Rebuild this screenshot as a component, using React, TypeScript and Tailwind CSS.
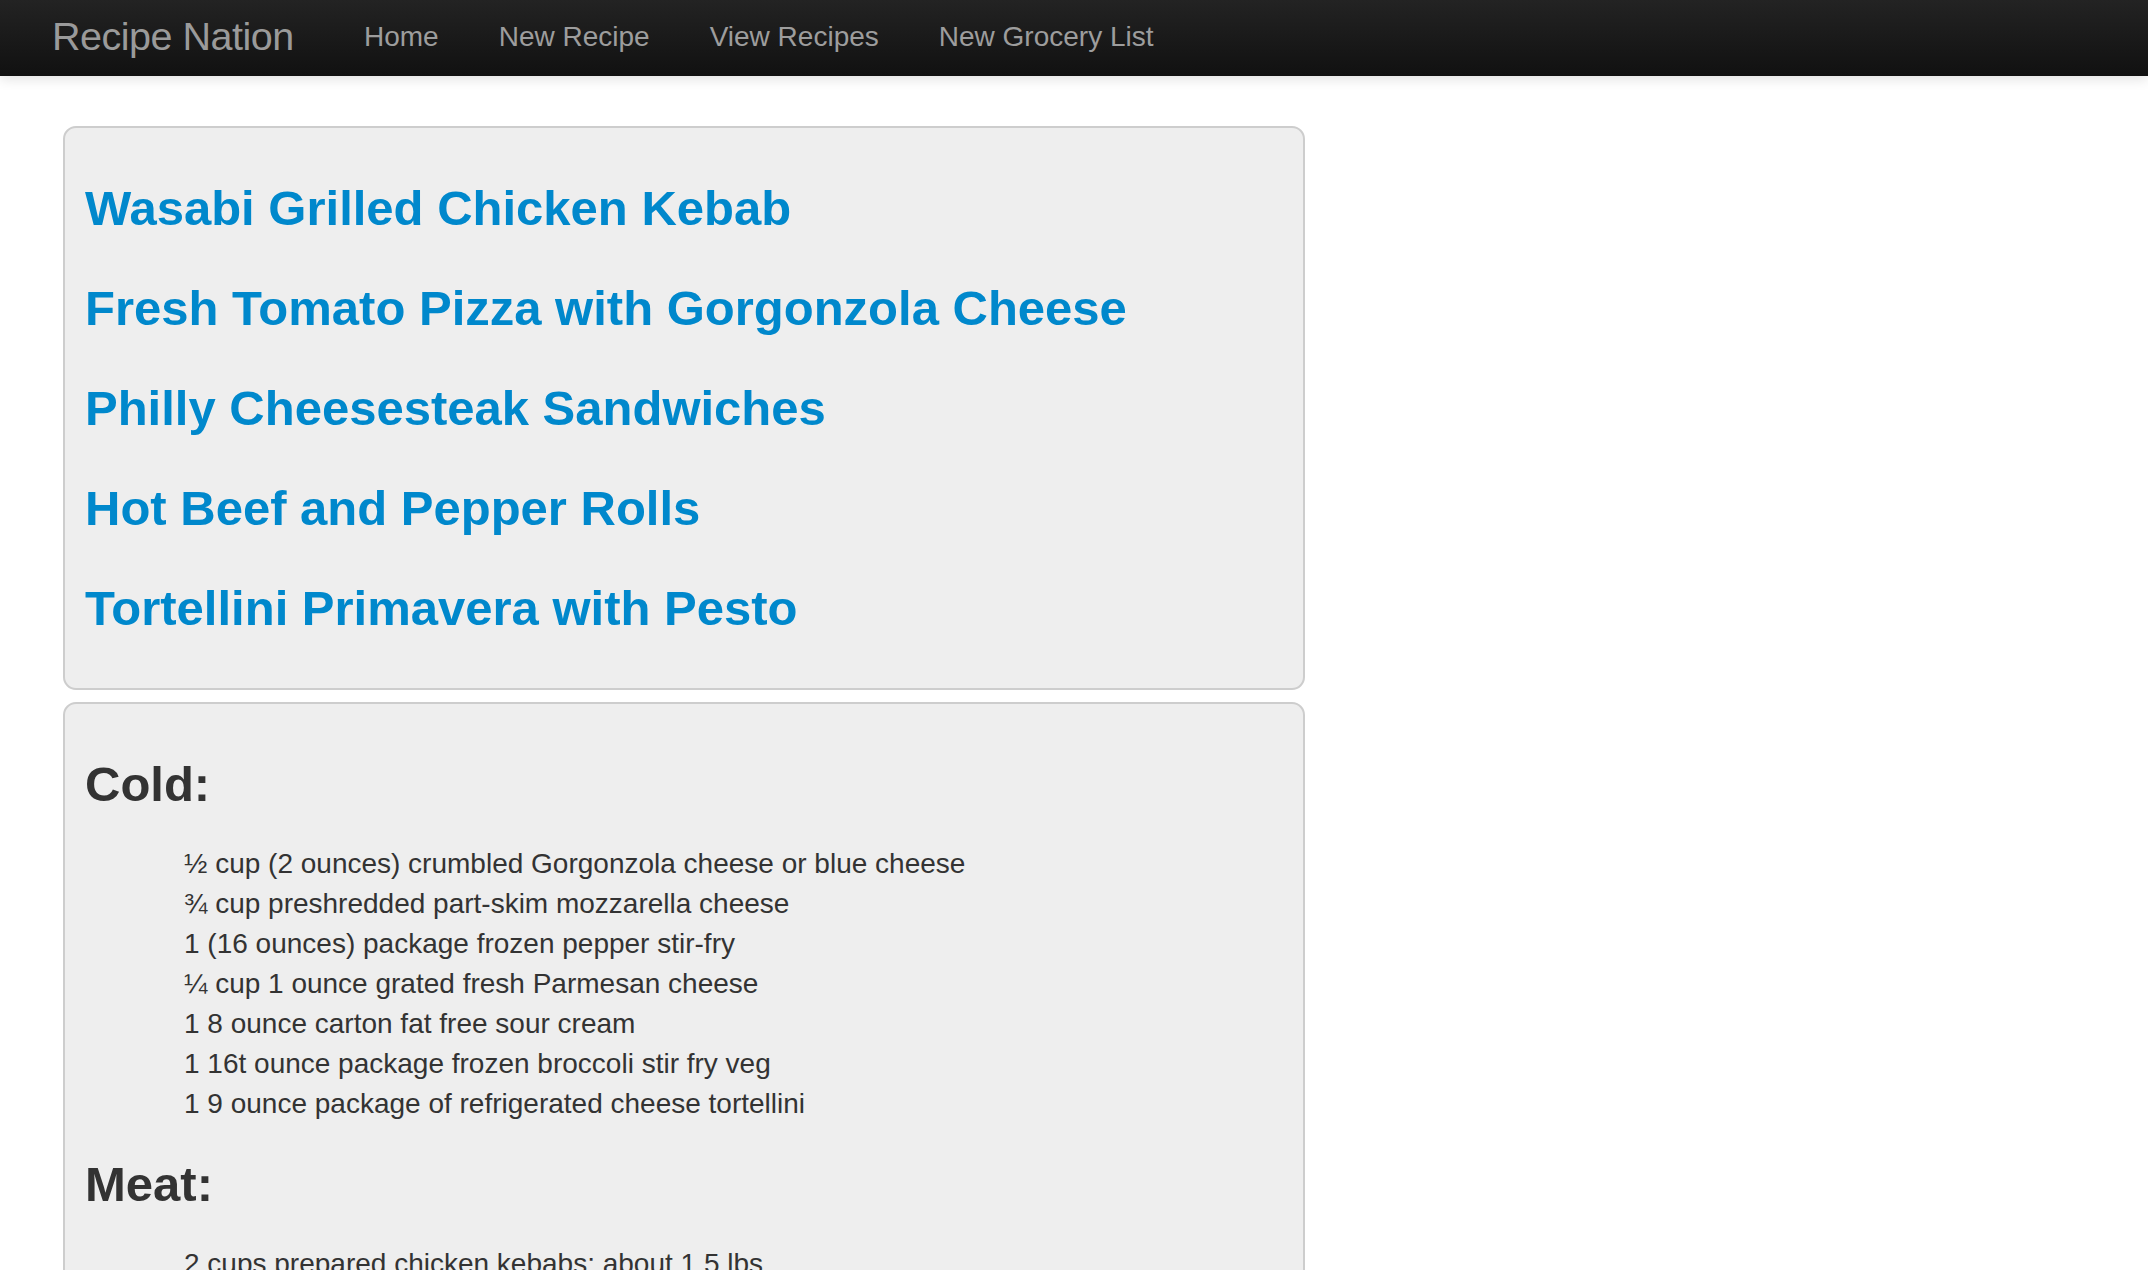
import React from "react";

const recipes = [
  "Wasabi Grilled Chicken Kebab",
  "Fresh Tomato Pizza with Gorgonzola Cheese",
  "Philly Cheesesteak Sandwiches",
  "Hot Beef and Pepper Rolls",
  "Tortellini Primavera with Pesto",
];

const groups: { title: string; items: string[] }[] = [
  {
    title: "Cold:",
    items: [
      "½ cup (2 ounces) crumbled Gorgonzola cheese or blue cheese",
      "¾ cup preshredded part-skim mozzarella cheese",
      "1 (16 ounces) package frozen pepper stir-fry",
      "¼ cup 1 ounce grated fresh Parmesan cheese",
      "1 8 ounce carton fat free sour cream",
      "1 16t ounce package frozen broccoli stir fry veg",
      "1 9 ounce package of refrigerated cheese tortellini",
    ],
  },
  {
    title: "Meat:",
    items: ["2 cups prepared chicken kebabs: about 1.5 lbs"],
  },
];

export default function App() {
  return (
    <div
      className="min-h-screen bg-white text-[#333] overflow-hidden"
      style={{ fontFamily: '"Liberation Sans", Arial, sans-serif' }}
    >
      <nav className="relative z-10 h-[76px] bg-gradient-to-b from-[#232323] to-[#111111] shadow-[0_3px_12px_rgba(0,0,0,0.12)] flex items-center pl-[52px]">
        <a className="w-[282px] text-[39.5px] leading-none text-[#9a9a9a] tracking-[-0.5px] -mt-[2px]">
          Recipe Nation
        </a>
        <ul className="flex items-center">
          {["Home", "New Recipe", "View Recipes", "New Grocery List"].map((l) => (
            <li key={l} className="px-[30px] text-[28px] leading-none text-[#9d9d9d] -mt-[2px]">
              {l}
            </li>
          ))}
        </ul>
      </nav>

      <div className="pl-[63px] pt-[50px] w-[1305px]">
        <div className="border-2 border-[#cdcdcd] rounded-[13px] bg-[#eeeeee] px-[20px] py-[20px]">
          {recipes.map((r) => (
            <h3
              key={r}
              className="my-[20px] text-[49px] leading-[80px] font-bold text-[#0088cc] whitespace-nowrap"
            >
              {r}
            </h3>
          ))}
        </div>

        <div className="mt-[12px] border-2 border-[#cdcdcd] rounded-[13px] bg-[#eeeeee] px-[20px] py-[20px]">
          {groups.map((g) => (
            <div key={g.title}>
              <h3 className="mt-[20px] mb-0 text-[49px] leading-[80px] font-bold text-[#333]">
                {g.title}
              </h3>
              <ul className="mt-[20px] mb-[20px] pl-[99px]">
                {g.items.map((it) => (
                  <li key={it} className="text-[28px] leading-[40px] text-[#333]">
                    {it}
                  </li>
                ))}
              </ul>
            </div>
          ))}
        </div>
      </div>
    </div>
  );
}
